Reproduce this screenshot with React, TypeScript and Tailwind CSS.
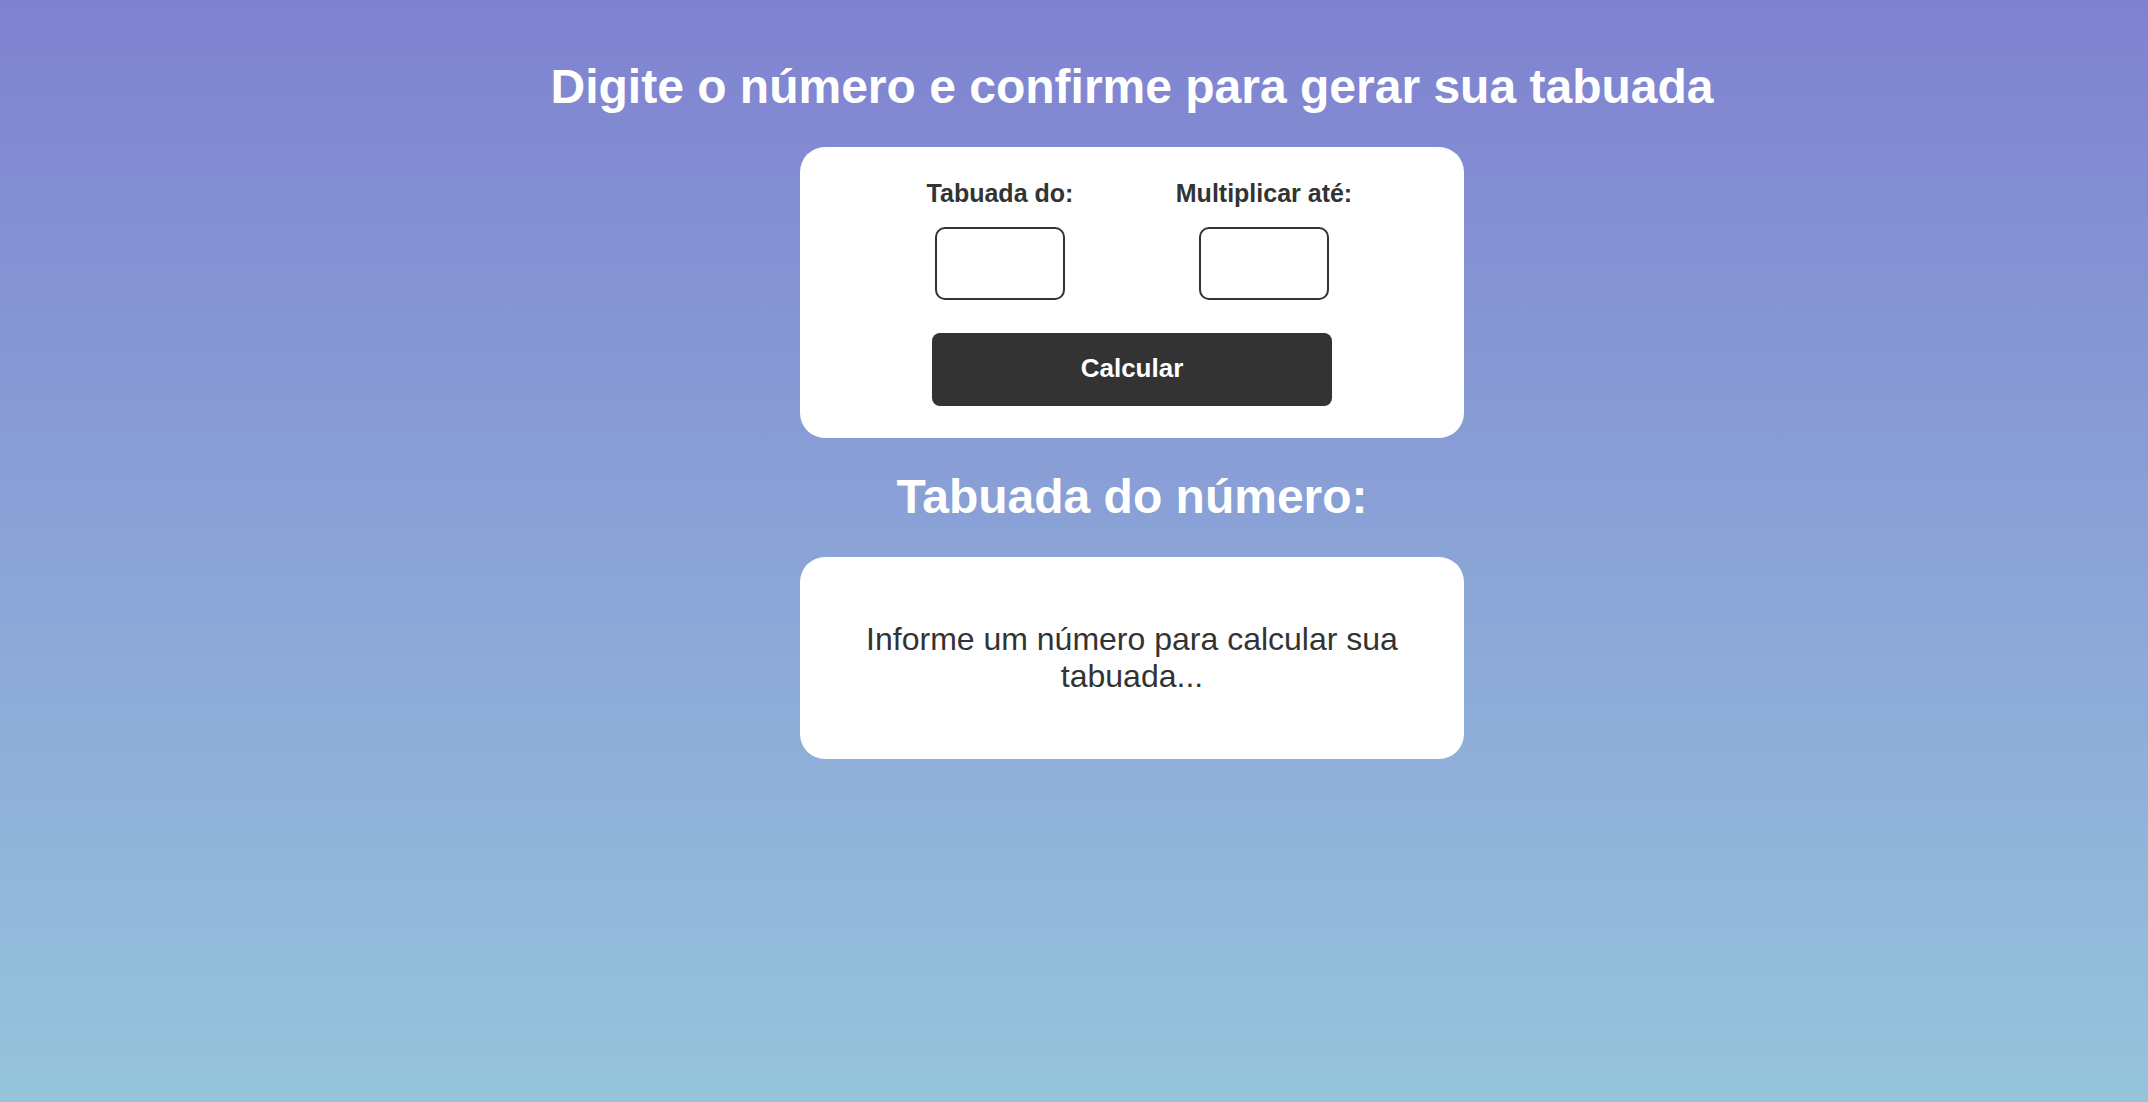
import React from "react";

export default function App() {
  return (
    <div
      className="min-h-screen w-full bg-linear-to-b from-[#7f82d0] to-[#96c4dc] flex flex-col items-center pl-[116px]"
      style={{ fontFamily: '"Liberation Sans", Arial, sans-serif' }}
    >
      <h1 className="mt-[60px] text-[48px] leading-[54px] font-bold text-white">
        Digite o número e confirme para gerar sua tabuada
      </h1>

      <div className="mt-[33px] w-[664px] bg-white rounded-[25px] pt-[32px] pb-[32px] flex flex-col items-center">
        <div className="flex gap-[64px]">
          <div className="w-[200px] flex flex-col items-center">
            <label className="text-[25px] leading-[28px] font-bold text-[#333333]">Tabuada do:</label>
            <input
              type="number"
              className="mt-[20px] w-[130px] h-[73px] border-2 border-[#333333] rounded-[10px] bg-white"
            />
          </div>
          <div className="w-[200px] flex flex-col items-center">
            <label className="text-[25px] leading-[28px] font-bold text-[#333333]">Multiplicar até:</label>
            <input
              type="number"
              className="mt-[20px] w-[130px] h-[73px] border-2 border-[#333333] rounded-[10px] bg-white"
            />
          </div>
        </div>
        <button className="mt-[33px] w-[400px] h-[73px] bg-[#333333] rounded-[8px] text-white text-[26px] font-bold pb-[2px]">
          Calcular
        </button>
      </div>

      <h2 className="mt-[32px] text-[48px] leading-[54px] font-bold text-white">Tabuada do número:</h2>

      <div className="mt-[33px] w-[664px] bg-white rounded-[25px] p-[32px]">
        <p className="my-[32px] text-[32px] leading-[37px] text-[#333333] text-center">
          Informe um número para calcular sua tabuada...
        </p>
      </div>
    </div>
  );
}
